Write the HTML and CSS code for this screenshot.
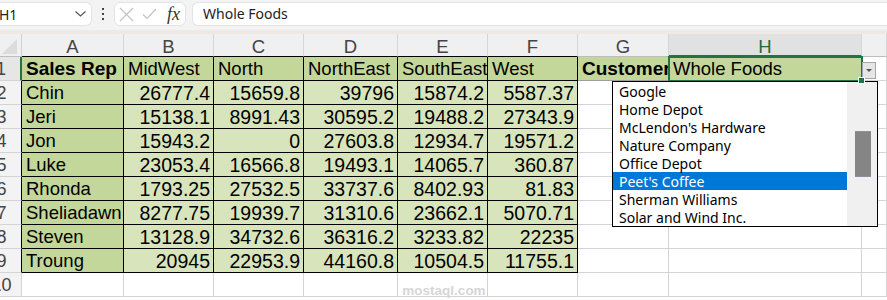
FILE: index.html
```html
<!DOCTYPE html>
<html lang="en">
<head>
    <meta charset="UTF-8">
    <title>Sales by Region</title>
    <link rel="stylesheet" href="styles.css">
</head>
<body>
    <div class="formula-bar">
        <div class="name-box">
            <span>H1</span>
            <svg width="11" height="6" viewBox="0 0 11 6"><path d="M0.5 0.5 L5.5 5 L10.5 0.5" fill="none" stroke="#555" stroke-width="1.2"/></svg>
        </div>
        <div class="more-dots">
            <span></span><span></span><span></span>
        </div>
        <div class="fx-box">
            <svg width="15" height="15" viewBox="0 0 15 15"><path d="M1 1 L14 14 M14 1 L1 14" stroke="#c2c2c2" stroke-width="1.2"/></svg>
            <svg width="15" height="12" viewBox="0 0 15 12"><path d="M1 6.5 L5 10.5 L14 1" fill="none" stroke="#c2c2c2" stroke-width="1.2"/></svg>
            <span class="fx">fx</span>
        </div>
        <div class="formula-input">Whole Foods</div>
    </div>
    <div class="band"></div>

    <div class="sheet">
        <!-- заголовки столбцов -->
        <div class="corner"><div class="corner-tri"></div></div>
        <div class="ch top">A</div>
        <div class="ch top">B</div>
        <div class="ch top">C</div>
        <div class="ch top">D</div>
        <div class="ch top">E</div>
        <div class="ch top">F</div>
        <div class="ch">G</div>
        <div class="ch sel">H</div>
        <div class="ch"></div>

        <!-- строка 1 -->
        <div class="rh sel"><span>1</span></div>
        <div class="c t dark bold">Sales Rep</div>
        <div class="c t dark">MidWest</div>
        <div class="c t dark">North</div>
        <div class="c t dark">NorthEast</div>
        <div class="c t dark">SouthEast</div>
        <div class="c t dark">West</div>
        <div class="c dark bold g1">Customer</div>
        <div class="c dark active">Whole Foods</div>
        <div class="c"></div>

        <div class="rh t"><span>2</span></div>
        <div class="c t dark">Chin</div>
        <div class="c t num">26777.4</div>
        <div class="c t num">15659.8</div>
        <div class="c t num">39796</div>
        <div class="c t num">15874.2</div>
        <div class="c t num">5587.37</div>
        <div class="c"></div>
        <div class="c"></div>
        <div class="c"></div>

        <div class="rh t"><span>3</span></div>
        <div class="c t dark">Jeri</div>
        <div class="c t num">15138.1</div>
        <div class="c t num">8991.43</div>
        <div class="c t num">30595.2</div>
        <div class="c t num">19488.2</div>
        <div class="c t num">27343.9</div>
        <div class="c"></div>
        <div class="c"></div>
        <div class="c"></div>

        <div class="rh t"><span>4</span></div>
        <div class="c t dark">Jon</div>
        <div class="c t num">15943.2</div>
        <div class="c t num">0</div>
        <div class="c t num">27603.8</div>
        <div class="c t num">12934.7</div>
        <div class="c t num">19571.2</div>
        <div class="c"></div>
        <div class="c"></div>
        <div class="c"></div>

        <div class="rh t"><span>5</span></div>
        <div class="c t dark">Luke</div>
        <div class="c t num">23053.4</div>
        <div class="c t num">16566.8</div>
        <div class="c t num">19493.1</div>
        <div class="c t num">14065.7</div>
        <div class="c t num">360.87</div>
        <div class="c"></div>
        <div class="c"></div>
        <div class="c"></div>

        <div class="rh t"><span>6</span></div>
        <div class="c t dark">Rhonda</div>
        <div class="c t num">1793.25</div>
        <div class="c t num">27532.5</div>
        <div class="c t num">33737.6</div>
        <div class="c t num">8402.93</div>
        <div class="c t num">81.83</div>
        <div class="c"></div>
        <div class="c"></div>
        <div class="c"></div>

        <div class="rh t"><span>7</span></div>
        <div class="c t dark">Sheliadawn</div>
        <div class="c t num">8277.75</div>
        <div class="c t num">19939.7</div>
        <div class="c t num">31310.6</div>
        <div class="c t num">23662.1</div>
        <div class="c t num">5070.71</div>
        <div class="c"></div>
        <div class="c"></div>
        <div class="c"></div>

        <div class="rh t"><span>8</span></div>
        <div class="c t dark">Steven</div>
        <div class="c t num">13128.9</div>
        <div class="c t num">34732.6</div>
        <div class="c t num">36316.2</div>
        <div class="c t num">3233.82</div>
        <div class="c t num">22235</div>
        <div class="c"></div>
        <div class="c"></div>
        <div class="c"></div>

        <div class="rh t"><span>9</span></div>
        <div class="c t dark">Troung</div>
        <div class="c t num">20945</div>
        <div class="c t num">22953.9</div>
        <div class="c t num">44160.8</div>
        <div class="c t num">10504.5</div>
        <div class="c t num">11755.1</div>
        <div class="c"></div>
        <div class="c"></div>
        <div class="c"></div>

        <div class="rh"><span>10</span></div>
        <div class="c"></div>
        <div class="c"></div>
        <div class="c"></div>
        <div class="c"></div>
        <div class="c"></div>
        <div class="c"></div>
        <div class="c"></div>
        <div class="c"></div>
        <div class="c"></div>
    </div>

    <!-- кнопка и список проверки данных -->
    <div class="dd-button"></div>
    <div class="dd-list">
        <div class="dd-items">
            <div class="dd-item">Google</div>
            <div class="dd-item">Home Depot</div>
            <div class="dd-item">McLendon's Hardware</div>
            <div class="dd-item">Nature Company</div>
            <div class="dd-item">Office Depot</div>
            <div class="dd-item picked">Peet's Coffee</div>
            <div class="dd-item">Sherman Williams</div>
            <div class="dd-item">Solar and Wind Inc.</div>
        </div>
        <div class="dd-scroll"><div class="dd-thumb"></div></div>
    </div>

    <div class="watermark">mostaql.com</div>
</body>
</html>
```

FILE: styles.css
```css
body {
    margin: 0;
    padding: 0;
    width: 887px;
    height: 300px;
    overflow: hidden;
    background: #fff;
    font-family: "Liberation Sans", Arial, sans-serif;
    position: relative;
}

/* Строка формул */
.formula-bar {
    height: 30px;
    background: #f3f3f3;
    display: flex;
    align-items: flex-start;
    padding-top: 2px;
    box-sizing: border-box;
    font-family: "Noto Sans", "Open Sans", sans-serif;
}

.name-box {
    width: 92px;
    height: 24px;
    box-sizing: border-box;
    background: #fff;
    border: 1px solid #e3e3e3;
    border-left: none;
    border-radius: 0 6px 6px 0;
    display: flex;
    align-items: center;
    justify-content: space-between;
    padding: 0 5px 0 0;
    font-size: 14px;
    color: #222;
}

.name-box span {
    margin-left: -1px;
}

.more-dots {
    width: 22px;
    height: 24px;
    display: flex;
    flex-direction: column;
    align-items: center;
    justify-content: center;
    gap: 3px;
}

.more-dots span {
    width: 2px;
    height: 2px;
    background: #444;
}

.fx-box {
    width: 72px;
    height: 24px;
    box-sizing: border-box;
    background: #fff;
    border: 1px solid #e3e3e3;
    border-radius: 6px;
    display: flex;
    align-items: center;
    padding-left: 4px;
    gap: 8px;
}

.fx {
    font-family: "Liberation Serif", serif;
    font-style: italic;
    font-size: 18px;
    color: #333;
    margin-left: 2px;
}

.formula-input {
    flex: 1;
    height: 24px;
    margin-left: 6px;
    box-sizing: border-box;
    background: #fff;
    border: 1px solid #e3e3e3;
    border-right: none;
    border-radius: 6px 0 0 6px;
    padding-left: 10px;
    font-size: 14px;
    line-height: 22px;
    color: #222;
}

.band {
    height: 4px;
    background: #ece9e6;
}

/* Лист */
.sheet {
    display: grid;
    grid-template-columns: 22px 102px 90px 90px 94px 90px 90px 91px 193px 1fr;
    grid-template-rows: 23px repeat(10, 24px);
}

.corner {
    background: #f0f0f0;
    border-right: 1px solid #d0d0d0;
    border-bottom: 1px solid #bdbdbd;
    box-sizing: border-box;
    display: flex;
    align-items: flex-end;
    justify-content: flex-end;
    padding: 0 4px 2px 0;
}

.corner-tri {
    width: 0;
    height: 0;
    border-left: 15px solid transparent;
    border-bottom: 15px solid #dcdcdc;
}

.ch {
    background: #f0f0f0;
    border-right: 1px solid #d6d6d6;
    border-bottom: 1px solid #bdbdbd;
    box-sizing: border-box;
    text-align: center;
    font-size: 18.5px;
    line-height: 23px;
    padding-top: 1px;
    color: #444;
}

.ch.top {
    border-bottom-color: #000;
}

.ch.sel {
    background: #e1e1e1;
    border-bottom: 2px solid #217346;
    color: #1d6b43;
}

.rh {
    background: #f3f3f3;
    border-right: 1px solid #d4d4d4;
    border-bottom: 1px solid #d4d4d4;
    box-sizing: border-box;
    overflow: hidden;
    display: flex;
    justify-content: center;
    padding-right: 18px;
    font-size: 18px;
    line-height: 24px;
    color: #444;
}

.rh span {
    white-space: nowrap;
}

.rh.t {
    border-right-color: #000;
}

.rh.sel {
    background: #e6e6e6;
    border-right: 2px solid #217346;
}

.c {
    border-right: 1px solid #d4d4d4;
    border-bottom: 1px solid #d4d4d4;
    box-sizing: border-box;
    font-size: 18.5px;
    line-height: 24px;
    padding: 0 3px 0 4px;
    white-space: nowrap;
    overflow: hidden;
    color: #000;
}

.c.t {
    border-right-color: #000;
    border-bottom-color: #000;
}

.dark {
    background: #c4d79b;
}

.num {
    background: #d8e4bc;
    text-align: right;
    font-size: 19.5px;
}

.bold {
    font-weight: bold;
    font-size: 19px;
}

.g1 {
    border-bottom-color: #9d9d9d;
}

.active {
    position: relative;
    overflow: visible;
    border-right: none;
    border-bottom: none;
}

.active::after {
    content: "";
    position: absolute;
    top: -1px;
    left: -1px;
    right: -1px;
    bottom: -1px;
    border: 2px solid #217346;
}

.active::before {
    content: "";
    position: absolute;
    right: -3px;
    bottom: -3px;
    width: 5px;
    height: 5px;
    background: #217346;
    border: 1px solid #fff;
    z-index: 1;
}

/* Выпадающий список */
.dd-button {
    position: absolute;
    left: 862px;
    top: 62px;
    width: 14px;
    height: 17px;
    box-sizing: border-box;
    background: #e6e6e6;
    border: 1px solid #a5a5ae;
    display: flex;
    align-items: center;
    justify-content: center;
}

.dd-button::after {
    content: "";
    border-left: 3px solid transparent;
    border-right: 3px solid transparent;
    border-top: 3px solid #555;
}

.dd-list {
    position: absolute;
    left: 612px;
    top: 81px;
    width: 266px;
    height: 146px;
    box-sizing: border-box;
    background: #fff;
    border: 1px solid #000;
    display: flex;
    font-family: "Noto Sans", "Open Sans", sans-serif;
}

.dd-items {
    flex: 1;
}

.dd-item {
    height: 18px;
    box-sizing: border-box;
    padding: 1px 0 0 6px;
    line-height: 18px;
    font-size: 14px;
    color: #000;
    white-space: nowrap;
}

.dd-item.picked {
    background: #0078d7;
    color: #fff;
}

.dd-scroll {
    width: 30px;
    background: #f0f0f0;
    padding: 49px 0 0 8px;
    box-sizing: border-box;
}

.dd-thumb {
    width: 16px;
    height: 46px;
    box-sizing: border-box;
    background: #858585;
    border-top: 1px solid #8e8ea0;
    border-bottom: 1px solid #8e8ea0;
}

/* Водяной знак */
.watermark {
    position: absolute;
    left: 400px;
    top: 283px;
    width: 88px;
    text-align: center;
    color: #d6d6d6;
    font-weight: bold;
    font-size: 13.5px;
    line-height: 15px;
}
```
